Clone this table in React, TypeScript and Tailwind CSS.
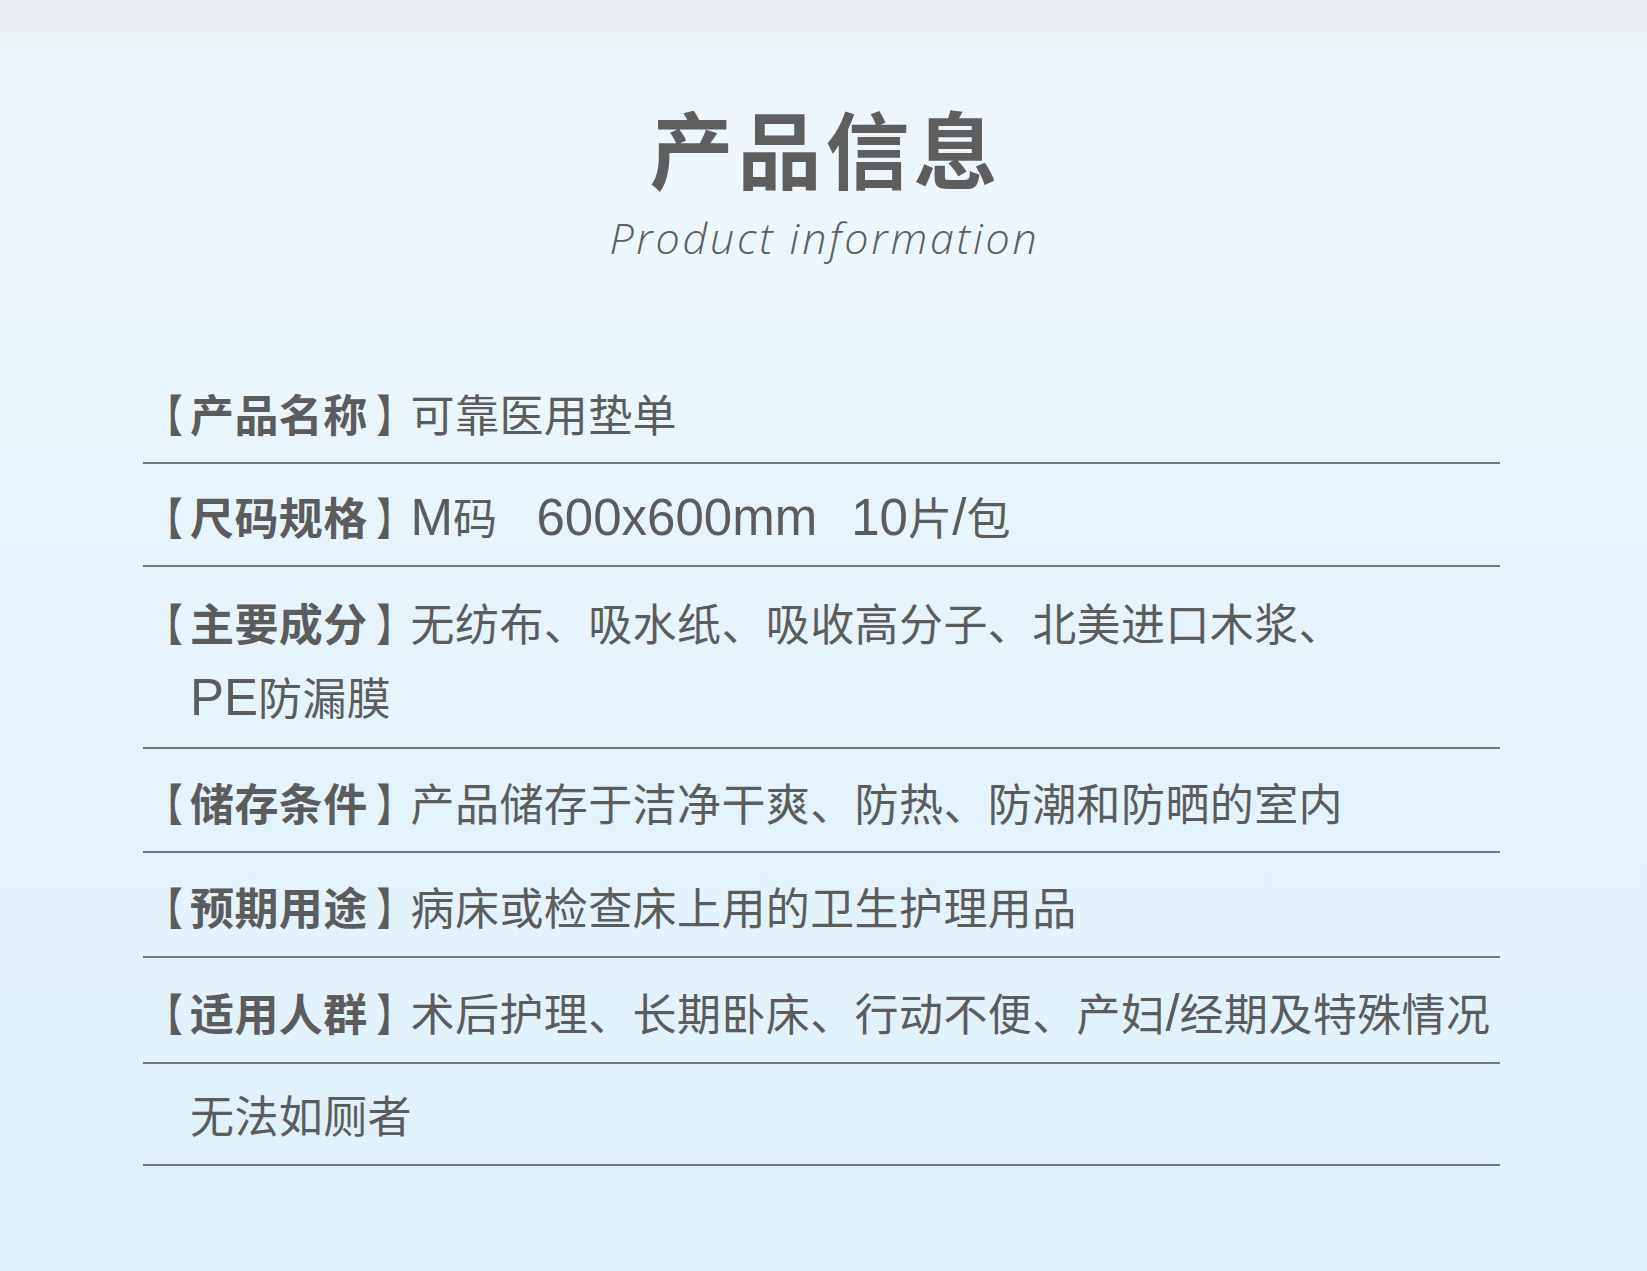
import React from "react";

const cjk = { fontFamily: '"Noto Sans CJK SC", "Noto Sans", sans-serif' };
const latinFont = { fontFamily: '"Liberation Sans", Arial, sans-serif' };

function L({ children, className = "" }: { children: React.ReactNode; className?: string }) {
  return (
    <span className={`text-[51px] leading-[40px] tracking-normal ${className}`} style={latinFont}>
      {children}
    </span>
  );
}

type Row = { label: string; lines: React.ReactNode[]; pad: string };

const rows: Row[] = [
  { label: "产品名称", lines: ["可靠医用垫单"], pad: "pt-0 pb-[12px]" },
  {
    label: "尺码规格",
    lines: [
      <span key="a">
        <L>M</L>码<L className="ml-[39px]">600x600mm</L>
        <L className="ml-[34px]">10</L>片<L>/</L>包
      </span>,
    ],
    pad: "pt-[15px] pb-[12px]",
  },
  {
    label: "主要成分",
    lines: [
      "无纺布、吸水纸、吸收高分子、北美进口木浆、",
      <span key="b">
        <L>PE</L>防漏膜
      </span>,
    ],
    pad: "pt-[18px] pb-[14px]",
  },
  { label: "储存条件", lines: ["产品储存于洁净干爽、防热、防潮和防晒的室内"], pad: "pt-[16px] pb-[12px]" },
  { label: "预期用途", lines: ["病床或检查床上用的卫生护理用品"], pad: "pt-[16px] pb-[13px]" },
  {
    label: "适用人群",
    lines: [
      <span key="c">
        术后护理、长期卧床、行动不便、产妇<L>/</L>经期及特殊情况
      </span>,
    ],
    pad: "pt-[17px] pb-[13px]",
  },
  { label: "", lines: ["无法如厕者"], pad: "pt-[13px] pb-[13px]" },
];

export default function App() {
  return (
    <div
      className="w-[1647px] h-[1271px] overflow-hidden flex flex-col items-center"
      style={{
        ...cjk,
        background:
          "linear-gradient(to bottom, #e7ecef 0px, #edf5fa 60px, #eef7fd 200px, #e7f4fc 600px, #dff0fa 1271px)",
      }}
    >
      <h1 className="mt-[95px] text-[84px] leading-[104px] font-bold tracking-[4px] text-[#5e5e5e] pl-[4px]">
        产品信息
      </h1>
      <div
        className="mt-[13px] text-[43px] leading-[52px] italic font-light tracking-[2.8px] text-[#5e5e5e] pl-[2px]"
        style={{ fontFamily: '"Open Sans", sans-serif' }}
      >
        Product information
      </div>

      <div className="mt-[112px] w-[1357px] ml-[-4px] flex flex-col text-[#5c5c5c]">
        {rows.map((r, i) => (
          <div key={i} className={`border-b-2 border-[#75787a] ${r.pad}`}>
            {r.lines.map((ln, j) => (
              <div
                key={j}
                className="flex items-baseline text-[44px] leading-[74px] tracking-[0.4px] whitespace-nowrap"
              >
                {j === 0 && r.label ? (
                  <span className="flex items-baseline shrink-0">
                    <span className="w-[47px] shrink-0 font-bold">
                      <span className="inline-block ml-[0px] scale-x-[0.8]">【</span>
                    </span>
                    <span className="font-bold">{r.label}</span>
                    <span className="w-[43px] shrink-0 font-bold">
                      <span className="inline-block translate-x-[4px] scale-x-[0.8]">】</span>
                    </span>
                  </span>
                ) : (
                  <span className="w-[47px] shrink-0" />
                )}
                <span>{ln}</span>
              </div>
            ))}
          </div>
        ))}
      </div>
    </div>
  );
}
